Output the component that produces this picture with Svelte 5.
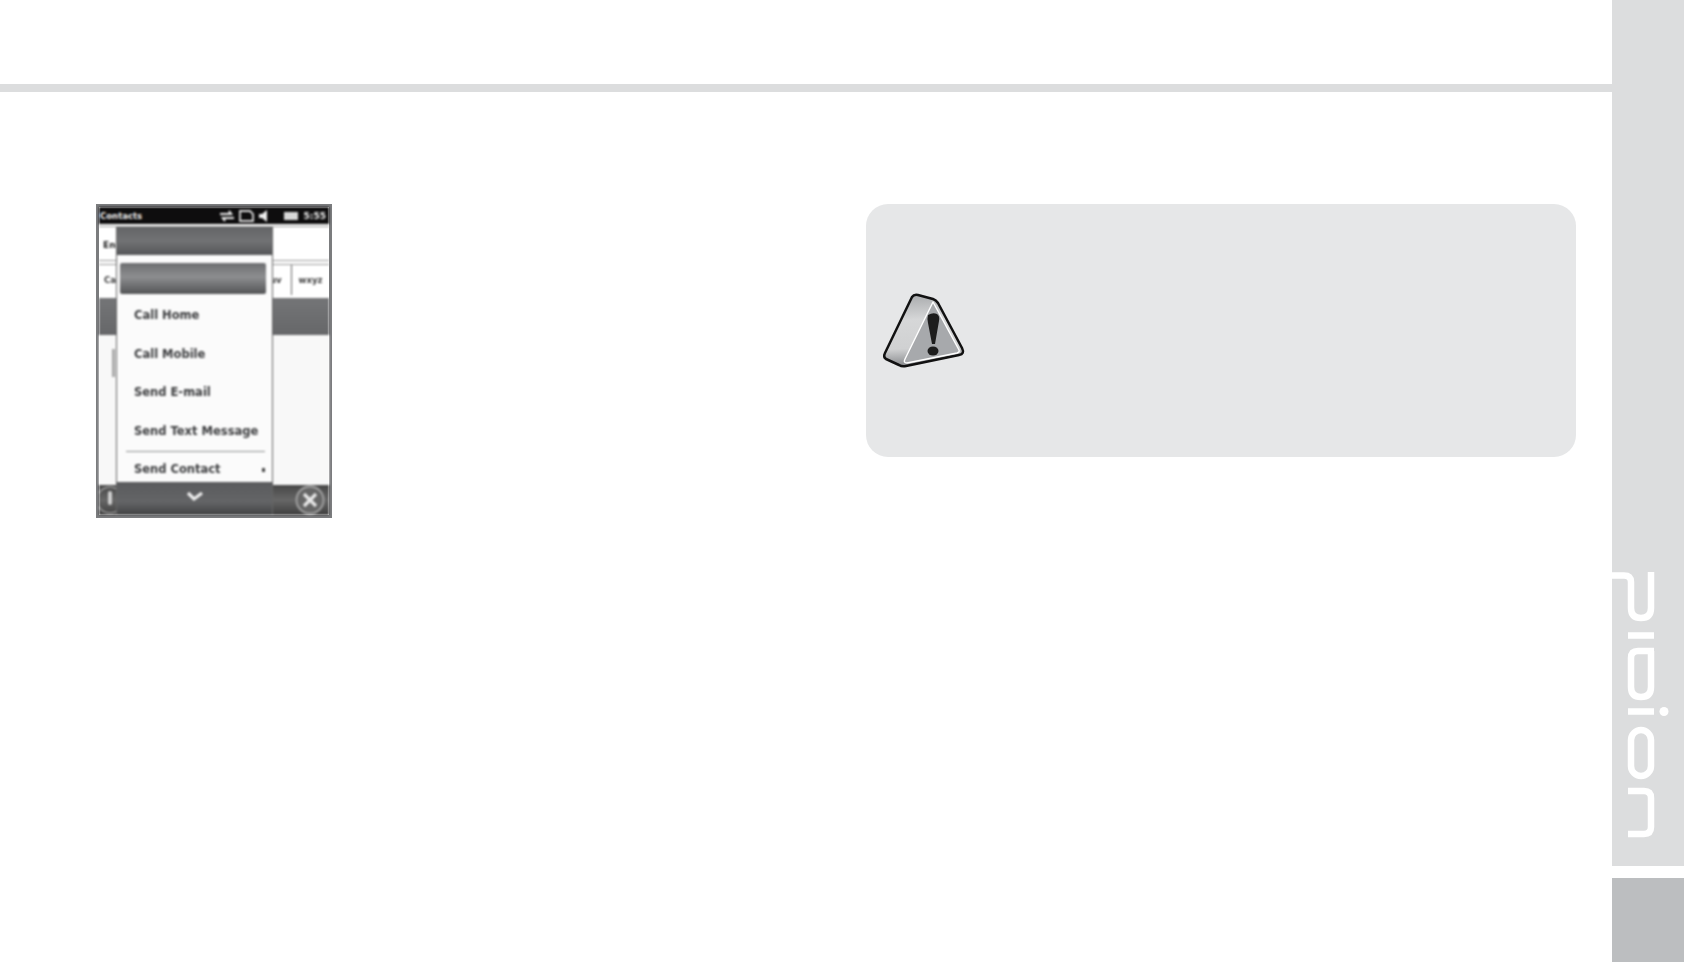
<script>
  const items = ["Call Home", "Call Mobile", "Send E-mail", "Send Text Message"];
</script>

<div class="page">
  <main>
    <div class="rule"></div>
    <div class="content">
      <div class="phone">
        <div class="screen">
          <div class="status">
            <span class="title">Contacts</span>
            <svg class="status-icons" width="60" height="14" viewBox="0 0 60 14">
              <path d="M1 5h11l-2-3M15 9H4l2 3" fill="none" stroke="#eee" stroke-width="2.200" />
              <path d="M21 12V2h10l3 3v7z" fill="none" stroke="#ddd" stroke-width="1.800" />
              <path d="M40 5h3l5-4v12l-5-4h-3z" fill="#eee" />
            </svg>
            <span class="batt"></span>
            <span class="clock">5:55</span>
          </div>
          <div class="search"><span>En</span></div>
          <div class="tabs">
            <span class="tab-first">Ca</span>
            <span class="tab-mid">uv</span>
            <span class="tab-last">wxyz</span>
          </div>
          <div class="band"></div>
          <div class="list"><span class="bracket"></span></div>
          <div class="softbar">
            <svg width="36" height="30" viewBox="0 0 36 30">
              <circle cx="11" cy="15" r="13" fill="none" stroke="#999" stroke-width="1.500" />
              <rect x="9" y="6" width="4" height="14" rx="2" fill="#d0d0d0" />
            </svg>
            <svg width="36" height="30" viewBox="0 0 36 30">
              <circle cx="17" cy="15" r="13.500" fill="#666" stroke="#a5a5a5" stroke-width="1.800" />
              <path d="M11 9l12 12M23 9L11 21" stroke="#e8e8e8" stroke-width="3.200" />
            </svg>
          </div>

          <div class="menu">
            <div class="menu-head"></div>
            <div class="menu-body">
              <div class="selected"></div>
              {#each items as item}
                <div class="item">{item}</div>
              {/each}
              <div class="sep"></div>
              <div class="item last">Send Contact<span class="arrow"></span></div>
            </div>
            <div class="menu-foot">
              <svg width="18" height="12" viewBox="0 0 18 12">
                <path d="M2 3l6 6 8-6" fill="none" stroke="#eee" stroke-width="3.200" />
              </svg>
            </div>
          </div>
        </div>
      </div>

      <div class="note">
        <svg class="warn" width="100" height="90" viewBox="0 0 100 90">
          <defs>
            <linearGradient id="side" x1="0.3" y1="0" x2="0.35" y2="1">
              <stop offset="0" stop-color="#a9abad" />
              <stop offset="0.35" stop-color="#d6d7d8" />
              <stop offset="0.75" stop-color="#d0d1d2" />
              <stop offset="1" stop-color="#85878a" />
            </linearGradient>
          </defs>
          <path d="M37 12Q39 9 43 10L58 14Q61 15 63 18L87 63Q90 69 84 70L31 81Q27 82 24 80L11 74Q8 72 10 68z"
            fill="url(#side)" stroke="#111" stroke-width="2.500" stroke-linejoin="round" />
          <path d="M58 17L84 65Q85 67 82 68L32 78Q28 78 30 74z" fill="#a7a9ac" stroke="#fff" stroke-width="1.400" stroke-linejoin="round" />
          <path d="M53 30Q58 27 62 29Q65 31 64 36L60 59H57L53 38Q52 33 53 30z" fill="#1d1d1d" />
          <ellipse cx="58" cy="66" rx="5.500" ry="4.600" fill="#1d1d1d" />
        </svg>
      </div>
    </div>
  </main>

  <aside>
    <div class="side-top">
      <svg class="logo" width="72" height="275" viewBox="1612 570 72 275">
        <g fill="none" stroke="#fff" stroke-width="6.500">
          <path d="M1612 575.500H1624Q1631 575.500 1631 582V608Q1631 618 1641 618Q1651 618 1651 608V572" />
          <path d="M1628 635.500H1654" />
          <path d="M1654 651H1638Q1631 651 1631 658V687Q1631 697 1641 697Q1651 697 1651 687V651" />
          <path d="M1628 711.500H1654" />
          <rect x="1631" y="730" width="20" height="46" rx="10" />
          <path d="M1628 791H1644Q1651 791 1651 798V827Q1651 834 1644 834H1628" />
        </g>
        <circle cx="1664" cy="711.500" r="4.500" fill="#fff" />
      </svg>
    </div>
    <div class="side-tab"></div>
  </aside>
</div>

<style>
  :global(body) {
    margin: 0;
    background: #fff;
  }

  .page {
    display: flex;
    width: 1684px;
    height: 962px;
    overflow: hidden;
    font-family: "DejaVu Sans", sans-serif;
  }

  main {
    flex: 1;
    padding-top: 84px;
  }

  .rule {
    height: 8px;
    background: #dcddde;
  }

  .content {
    display: flex;
    align-items: flex-start;
    margin-top: 112px;
    padding-left: 96px;
  }

  .phone {
    width: 236px;
    height: 314px;
    box-sizing: border-box;
    border: 3px solid #7b7c7e;
    background: #fff;
    flex: none;
  }

  .screen {
    position: relative;
    height: 100%;
    display: flex;
    flex-direction: column;
    filter: blur(0.9px);
    overflow: hidden;
  }

  .status {
    height: 17px;
    flex: none;
    display: flex;
    align-items: center;
    padding: 0 3px 0 1px;
    background: #0e0d0e;
    color: #f0f0f0;
    font-size: 8.500px;
    font-weight: 700;
  }

  .title {
    flex: 1;
  }

  .batt {
    width: 14px;
    height: 8px;
    margin: 0 6px 0 5px;
    background: #d8d8d8;
  }

  .clock {
    font-size: 9px;
  }

  .search {
    height: 31px;
    flex: none;
    margin-top: 2px;
    padding-top: 2px;
    padding-left: 4px;
    display: flex;
    align-items: center;
    border-top: 1px solid #999;
    border-bottom: 1px solid #999;
    color: #222;
    font-size: 9px;
    font-weight: 700;
  }

  .tabs {
    height: 30px;
    flex: none;
    margin-top: 3px;
    display: flex;
    align-items: center;
    font-size: 8.500px;
    font-weight: 700;
    color: #3a3a3a;
    border-top: 1px solid #999;
  }

  .tab-first {
    flex: 1;
    padding-left: 5px;
  }

  .tab-mid {
    width: 21px;
  }

  .tab-last {
    width: 37px;
    height: 100%;
    display: flex;
    align-items: center;
    justify-content: center;
    border-left: 1px solid #666;
  }

  .band {
    height: 37px;
    flex: none;
    margin-top: 3px;
    background: linear-gradient(#747577, #666769);
  }

  .list {
    flex: 1;
    position: relative;
    background: #f8f8f8;
  }

  .bracket {
    position: absolute;
    left: 13px;
    top: 14px;
    width: 3px;
    height: 28px;
    background: #a8a8a8;
  }

  .softbar {
    height: 30px;
    flex: none;
    display: flex;
    justify-content: space-between;
    align-items: flex-end;
    background: linear-gradient(#464646, #676767 50%, #3e3e3e);
  }

  .menu {
    position: absolute;
    left: 17px;
    top: 20px;
    width: 157px;
    height: 288px;
    box-sizing: border-box;
    display: flex;
    flex-direction: column;
    border-right: 1px solid #666;
    border-left: 1px solid #666;
  }

  .menu-head {
    height: 28px;
    flex: none;
    background: linear-gradient(#636466, #727375 50%, #545557);
  }

  .menu-body {
    flex: 1;
    background: #fbfbfb;
    padding: 8px 6px 0 3px;
    overflow: hidden;
    color: #3a3b3d;
    font-size: 11.500px;
    font-weight: 700;
  }

  .selected {
    height: 31px;
    margin-bottom: 2px;
    border-radius: 2px;
    background: linear-gradient(#6d6e70, #8d8e90 45%, #535456);
  }

  .item {
    position: relative;
    height: 38.700px;
    line-height: 38px;
    padding-left: 14px;
    white-space: nowrap;
  }

  .sep {
    height: 1px;
    margin: 0 1px 0 6px;
    background: #8d8e90;
  }

  .item.last {
    height: 30px;
    line-height: 35px;
  }

  .arrow {
    position: absolute;
    right: 1px;
    top: 16px;
    width: 3px;
    height: 4px;
    background: #444;
  }

  .menu-foot {
    height: 33px;
    flex: none;
    display: flex;
    justify-content: center;
    padding-top: 8px;
    box-sizing: border-box;
    background: linear-gradient(#5a5b5d, #646567 60%, #414243);
  }

  .note {
    width: 710px;
    height: 253px;
    flex: none;
    margin-left: 534px;
    box-sizing: border-box;
    padding: 81px 0 0 9px;
    border-radius: 22px;
    background: #e6e7e8;
  }

  .warn {
    display: block;
  }

  aside {
    width: 72px;
    flex: none;
    display: flex;
    flex-direction: column;
  }

  .side-top {
    height: 866px;
    padding-top: 570px;
    box-sizing: border-box;
    background: #dcddde;
  }

  .logo {
    display: block;
  }

  .side-tab {
    flex: 1;
    margin-top: 12px;
    background: #bcbec0;
  }
</style>
